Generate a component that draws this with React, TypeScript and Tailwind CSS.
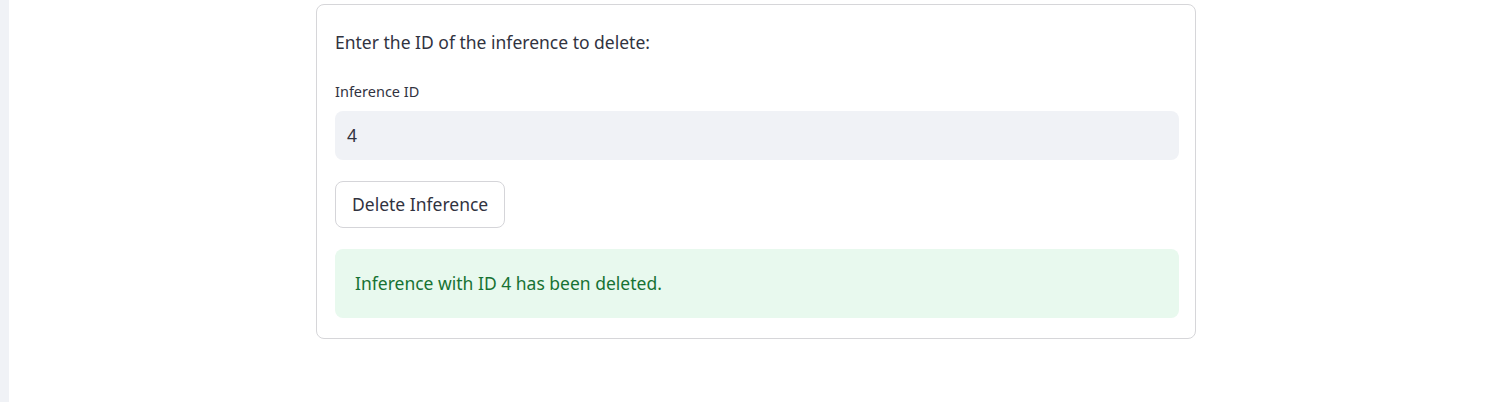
export default function App() {
  return (
    <div
      className="flex h-[402px] w-full bg-white text-[#31333f]"
      style={{ fontFamily: '"Noto Sans", "Liberation Sans", sans-serif' }}
    >
      {/* sidebar edge */}
      <div className="w-[9px] shrink-0 bg-[#f0f2f6]" />

      <div className="flex flex-1 justify-center">
        <div className="mt-[4px] mr-[4px] h-[335px] w-[880px] rounded-lg border border-[#d6d6d9] pt-[23px] pl-[18px] pr-[16px]">
          <p className="text-[17.5px] leading-[28px]">Enter the ID of the inference to delete:</p>

          <label className="mt-[25px] block text-[14.5px] leading-[20px]">Inference ID</label>
          <div className="mt-[10px] flex h-[49px] items-center rounded-lg bg-[#f0f2f6] px-[12px] text-[17.5px]">
            4
          </div>

          <button className="mt-[21px] flex h-[47px] items-center rounded-lg border border-[#d5d5d9] bg-white px-[16px] text-[17.5px]">
            Delete Inference
          </button>

          <div className="mt-[21px] flex h-[69px] items-center rounded-lg bg-[#e8f9ee] px-[20px] text-[17.5px] text-[#177233]">
            Inference with ID 4 has been deleted.
          </div>
        </div>
      </div>
    </div>
  );
}
